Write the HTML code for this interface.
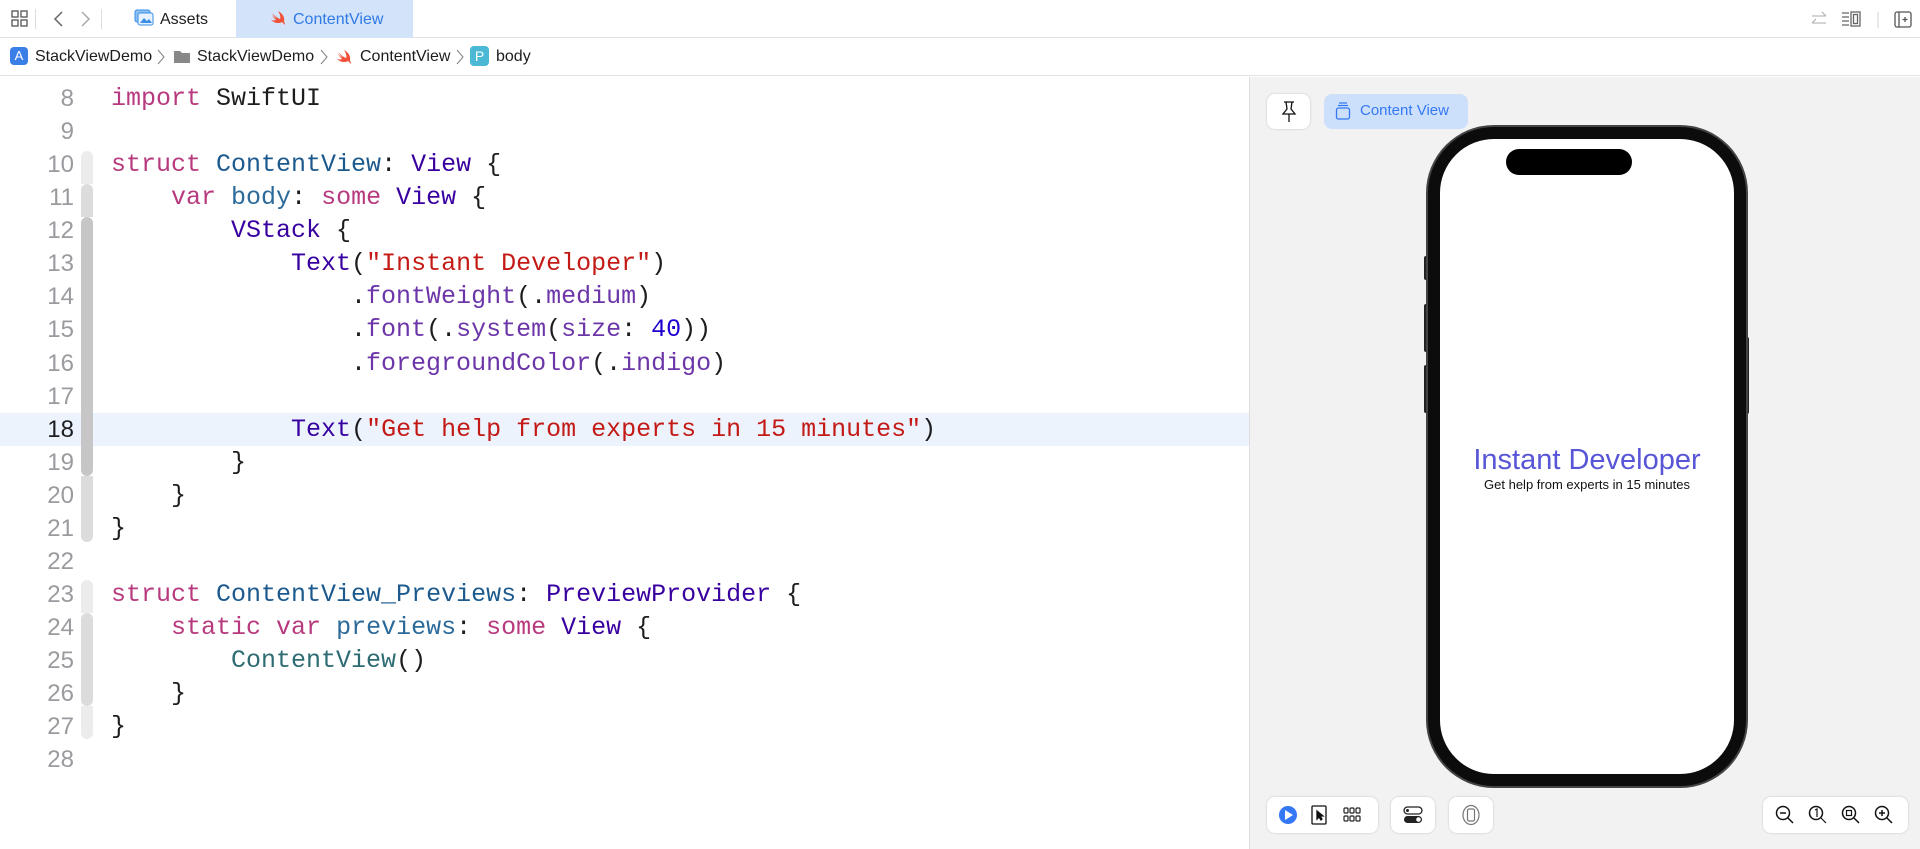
<!DOCTYPE html>
<html><head><meta charset="utf-8"><style>
*{margin:0;padding:0;box-sizing:border-box}
body{width:1920px;height:849px;overflow:hidden;background:#fff;font-family:"Liberation Sans",sans-serif;position:relative}
.abs{position:absolute}
.code{position:absolute;left:111px;top:82px;font-family:"Liberation Mono",monospace;font-size:25px;line-height:33.07px;white-space:pre;color:#1d1d1f}
.nums{position:absolute;left:0;width:74px;top:82px;text-align:right;font-size:24px;line-height:33.07px;color:#9a9a9f;font-family:"Liberation Sans",sans-serif}
.k{color:#b83a7e}.t{color:#1c5a8e}.s{color:#3900a0}.str{color:#c41a16}.m{color:#6c36a9}.n{color:#1c00cf}.p{color:#2c6a9a}.c{color:#2e6b73}
.btn{position:absolute;background:#fff;border-radius:8px;box-shadow:0 0 2px rgba(0,0,0,.2)}
.bc{position:absolute;top:47px;font-size:16px;line-height:19px;color:#1d1d1f;white-space:nowrap}
</style></head><body>
<!-- tab bar -->
<div class="abs" style="left:0;top:0;width:1920px;height:38px;background:#fff;border-bottom:1px solid #e2e2e2"></div>
<svg class="abs" style="left:10px;top:9px" width="20" height="20" viewBox="0 0 20 20" fill="none" stroke="#555" stroke-width="1.3"><rect x="2" y="2" width="6" height="6"/><rect x="11" y="2" width="6" height="6"/><rect x="2" y="11" width="6" height="6"/><rect x="11" y="11" width="6" height="6"/></svg>
<div class="abs" style="left:35px;top:9px;width:1px;height:20px;background:#ddd"></div>
<svg class="abs" style="left:52px;top:10px" width="14" height="18" viewBox="0 0 14 18" fill="none" stroke="#666" stroke-width="1.5"><path d="M10 2L3 9l7 7"/></svg>
<svg class="abs" style="left:78px;top:10px" width="14" height="18" viewBox="0 0 14 18" fill="none" stroke="#aaa" stroke-width="1.5"><path d="M4 2l7 7-7 7"/></svg>
<div class="abs" style="left:101px;top:9px;width:1px;height:20px;background:#ddd"></div>
<svg class="abs" style="left:134px;top:9px" width="20" height="18" viewBox="0 0 20 18"><rect x="1" y="1" width="15" height="12" rx="2" fill="#8cc0f0" stroke="#3a8ee6"/><rect x="4" y="4" width="15" height="12" rx="2" fill="#e6f2ff" stroke="#3a8ee6"/><path d="M6 14l4-5 3 3 2-2 3 4z" fill="#3a8ee6"/></svg>
<div class="abs" style="left:160px;top:11px;font-size:16px;color:#1d1d1f">Assets</div>
<div class="abs" style="left:236px;top:0;width:177px;height:38px;background:#d3e3fa"></div>
<svg class="abs" style="left:270px;top:11px" width="16" height="15" viewBox="0 0 16 15"><path d="M1 9c3 3 8 4 11 2 1 1 2 2 3 3 0-2-1-3-1-4 1-4-2-8-6-10 2 3 3 6 2 8C7 7 4 4 2 2c2 3 4 5 5 6C5 7 3 5 2 4c1 2 3 4 4 5-2 1-4 0-5 0z" fill="#f05138"/></svg>
<div class="abs" style="left:293px;top:11px;font-size:16px;color:#2f7ae5">ContentView</div>
<svg class="abs" style="left:1808px;top:9px" width="110" height="22" viewBox="0 0 110 22" fill="none" stroke-width="1.3"><path d="M4 7h14M14 3l4 4M18 14H4M8 10l-4 4" stroke="#bbb"/><path d="M34 4h7M34 8h7M34 12h7M34 16h7" stroke="#666"/><rect x="43" y="3" width="9" height="14" stroke="#666"/><rect x="45.5" y="5.5" width="4" height="9" stroke="#666"/><path d="M70 3v16" stroke="#ddd"/><rect x="87" y="3" width="16" height="15" rx="2" stroke="#555"/><path d="M91 3v15M97 8v5M94.5 10.5h5" stroke="#555"/></svg>
<!-- breadcrumb -->
<div class="abs" style="left:0;top:38px;width:1920px;height:38px;border-bottom:1px solid #e2e2e2"></div>
<div class="abs" style="left:10px;top:47px;width:18px;height:18px;border-radius:4px;background:#3a7ee8;color:#fff;font-size:13px;text-align:center;line-height:18px">A</div>
<div class="bc" style="left:35px">StackViewDemo</div>
<svg class="abs" style="left:157px;top:49px" width="8" height="16" viewBox="0 0 8 16" fill="none" stroke="#888" stroke-width="1.1"><path d="M1 1l6 7-6 7"/></svg>
<svg class="abs" style="left:173px;top:49px" width="18" height="15" viewBox="0 0 18 15"><path d="M1 2h6l2 2h8v10H1z" fill="#888"/></svg>
<div class="bc" style="left:197px">StackViewDemo</div>
<svg class="abs" style="left:320px;top:49px" width="8" height="16" viewBox="0 0 8 16" fill="none" stroke="#888" stroke-width="1.1"><path d="M1 1l6 7-6 7"/></svg>
<svg class="abs" style="left:336px;top:50px" width="16" height="15" viewBox="0 0 16 15"><path d="M1 9c3 3 8 4 11 2 1 1 2 2 3 3 0-2-1-3-1-4 1-4-2-8-6-10 2 3 3 6 2 8C7 7 4 4 2 2c2 3 4 5 5 6C5 7 3 5 2 4c1 2 3 4 4 5-2 1-4 0-5 0z" fill="#f05138"/></svg>
<div class="bc" style="left:360px">ContentView</div>
<svg class="abs" style="left:456px;top:49px" width="8" height="16" viewBox="0 0 8 16" fill="none" stroke="#888" stroke-width="1.1"><path d="M1 1l6 7-6 7"/></svg>
<div class="abs" style="left:470px;top:46px;width:19px;height:20px;border-radius:4px;background:#4bb8d6;color:#fff;font-size:14px;text-align:center;line-height:20px">P</div>
<div class="bc" style="left:496px">body</div>
<!-- editor -->
<div class="abs" style="left:0;top:413px;width:1249px;height:33px;background:#ecf3fd"></div>
<div class="abs" style="left:81px;top:151px;width:12px;height:33px;background:#ececec;border-radius:6px 6px 0 0"></div>
<div class="abs" style="left:81px;top:184px;width:12px;height:33px;background:#dcdcdc;border-radius:6px 6px 0 0"></div>
<div class="abs" style="left:81px;top:217px;width:12px;height:259px;background:#c6c6c6;border-radius:6px"></div>
<div class="abs" style="left:81px;top:476px;width:12px;height:66px;background:#dcdcdc;border-radius:0 0 6px 6px"></div>
<div class="abs" style="left:81px;top:580px;width:12px;height:33px;background:#ececec;border-radius:6px 6px 0 0"></div>
<div class="abs" style="left:81px;top:613px;width:12px;height:93px;background:#dcdcdc;border-radius:6px"></div>
<div class="abs" style="left:81px;top:706px;width:12px;height:33px;background:#ececec;border-radius:0 0 6px 6px"></div>
<div class="nums">8<br>9<br>10<br>11<br>12<br>13<br>14<br>15<br>16<br>17<br><span style="color:#1d1d1f">18</span><br>19<br>20<br>21<br>22<br>23<br>24<br>25<br>26<br>27<br>28</div>
<div class="code"><span class="k">import</span> SwiftUI

<span class="k">struct</span> <span class="t">ContentView</span>: <span class="s">View</span> {
    <span class="k">var</span> <span class="p">body</span>: <span class="k">some</span> <span class="s">View</span> {
        <span class="s">VStack</span> {
            <span class="s">Text</span>(<span class="str">"Instant Developer"</span>)
                .<span class="m">fontWeight</span>(.<span class="m">medium</span>)
                .<span class="m">font</span>(.<span class="m">system</span>(<span class="m">size</span>: <span class="n">40</span>))
                .<span class="m">foregroundColor</span>(.<span class="m">indigo</span>)

            <span class="s">Text</span>(<span class="str">"Get help from experts in 15 minutes"</span>)
        }
    }
}

<span class="k">struct</span> <span class="t">ContentView_Previews</span>: <span class="s">PreviewProvider</span> {
    <span class="k">static</span> <span class="k">var</span> <span class="p">previews</span>: <span class="k">some</span> <span class="s">View</span> {
        <span class="c">ContentView</span>()
    }
}
</div>
<!-- preview panel -->
<div class="abs" style="left:1249px;top:77px;width:671px;height:772px;background:#f2f2f2;border-left:1px solid #ddd"></div>
<div class="btn" style="left:1267px;top:94px;width:43px;height:35px"></div>
<svg class="abs" style="left:1279px;top:100px" width="20" height="24" viewBox="0 0 20 24" fill="none" stroke="#111" stroke-width="1.3"><path d="M5 2h10M7 2l1 7-4 5h12l-4-5 1-7M10 14v8"/></svg>
<div class="abs" style="left:1324px;top:94px;width:144px;height:35px;background:#cde0fb;border-radius:8px"></div>
<svg class="abs" style="left:1335px;top:102px" width="16" height="18" viewBox="0 0 16 18" fill="none" stroke="#3478f6" stroke-width="1.3"><rect x="1.5" y="6" width="13" height="11" rx="2"/><path d="M3 3.5h10M4 1h8"/></svg>
<div class="abs" style="left:1360px;top:102px;font-size:15px;color:#3478f6">Content View</div>
<!-- phone -->
<div class="abs" style="left:1424px;top:256px;width:5px;height:24px;background:#222;border-radius:2px"></div>
<div class="abs" style="left:1424px;top:304px;width:5px;height:48px;background:#222;border-radius:2px"></div>
<div class="abs" style="left:1424px;top:365px;width:5px;height:48px;background:#222;border-radius:2px"></div>
<div class="abs" style="left:1744px;top:337px;width:5px;height:77px;background:#222;border-radius:2px"></div>
<div class="abs" style="left:1428px;top:127px;width:318px;height:659px;background:#fff;border:12px solid #0c0c0c;border-radius:66px;box-shadow:0 0 0 2px #444"></div>
<div class="abs" style="left:1506px;top:149px;width:126px;height:26px;background:#000;border-radius:13px"></div>
<div class="abs" style="left:1428px;top:444px;width:318px;text-align:center;font-size:29px;color:#5856d6">Instant Developer</div>
<div class="abs" style="left:1428px;top:477px;width:318px;text-align:center;font-size:13px;color:#111">Get help from experts in 15 minutes</div>
<!-- bottom toolbar -->
<div class="btn" style="left:1267px;top:797px;width:111px;height:36px"></div>
<div class="abs" style="left:1279px;top:806px;width:18px;height:18px;border-radius:9px;background:#3478f6"></div>
<svg class="abs" style="left:1285px;top:810px" width="8" height="10"><path d="M0 0l8 5-8 5z" fill="#fff"/></svg>
<svg class="abs" style="left:1311px;top:805px" width="16" height="20" viewBox="0 0 16 20" fill="none" stroke="#111" stroke-width="1.3"><rect x="1" y="1" width="14" height="18" rx="1"/><path d="M6 6l0 8 2-2 2 3 1-1-2-3 3 0z" fill="#111"/></svg>
<svg class="abs" style="left:1343px;top:806px" width="18" height="18" viewBox="0 0 18 18" fill="none" stroke="#222" stroke-width="1.2"><rect x="1" y="2" width="4" height="5" rx="1"/><rect x="7" y="2" width="4" height="5" rx="1"/><rect x="13" y="2" width="4" height="5" rx="1"/><rect x="1" y="10" width="4" height="5" rx="1"/><rect x="7" y="10" width="4" height="5" rx="1"/><rect x="13" y="10" width="4" height="5" rx="1"/></svg>
<div class="btn" style="left:1391px;top:797px;width:44px;height:36px"></div>
<svg class="abs" style="left:1402px;top:805px" width="22" height="20" viewBox="0 0 22 20"><rect x="2" y="2" width="18" height="7" rx="3.5" fill="none" stroke="#222" stroke-width="1.3"/><circle cx="5.5" cy="5.5" r="1.5" fill="#222"/><rect x="2" y="11" width="18" height="7" rx="3.5" fill="#222"/><circle cx="16.5" cy="14.5" r="2.3" fill="#fff"/></svg>
<div class="btn" style="left:1449px;top:797px;width:44px;height:36px"></div>
<svg class="abs" style="left:1461px;top:804px" width="20" height="22" viewBox="0 0 20 22" fill="none" stroke="#777" stroke-width="1.2"><ellipse cx="10" cy="11" rx="8" ry="9.5"/><rect x="6.5" y="5" width="7" height="12" rx="1.5"/></svg>
<div class="btn" style="left:1763px;top:797px;width:145px;height:36px"></div>
<svg class="abs" style="left:1774px;top:804px" width="126" height="22" viewBox="0 0 126 22" fill="none" stroke="#111" stroke-width="1.5"><circle cx="9" cy="9" r="6.5"/><path d="M14 14l5 5M6 9h6"/><circle cx="42" cy="9" r="6.5"/><path d="M47 14l5 5M41 6l2-1v8" stroke-width="1.2"/><circle cx="75" cy="9" r="6.5"/><path d="M80 14l5 5"/><rect x="72.5" y="6.5" width="5" height="5" stroke-width="1.2"/><circle cx="108" cy="9" r="6.5"/><path d="M113 14l5 5M105 9h6M108 6v6"/></svg>
</body></html>
